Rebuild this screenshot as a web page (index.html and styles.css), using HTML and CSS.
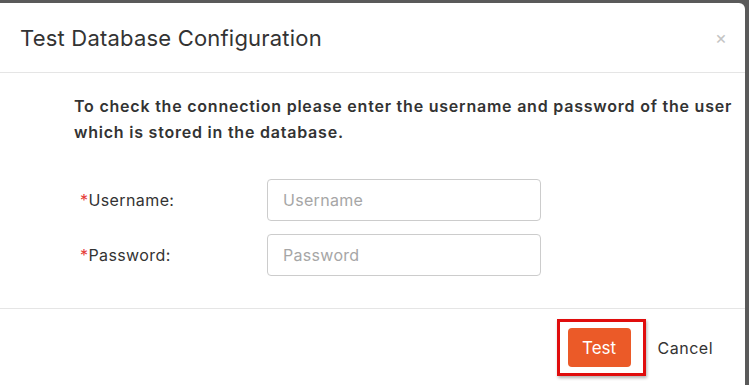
FILE: index.html
```html
<!DOCTYPE html>
<html lang="en">
<head>
    <meta charset="UTF-8">
    <meta name="viewport" content="width=device-width, initial-scale=1.0">
    <title>Test Database Configuration</title>
    <link rel="stylesheet" href="styles.css">
</head>
<body>
    <div class="modal">
        <div class="modal-header">
            <h4 class="modal-title">Test Database Configuration</h4>
            <span class="close">&times;</span>
        </div>
        <div class="modal-body">
            <p class="intro">To check the connection please enter the username and password of the user which is stored in the database.</p>
            <div class="form-row">
                <label class="label"><span class="req">*</span>Username:</label>
                <input class="input" type="text" placeholder="Username">
            </div>
            <div class="form-row">
                <label class="label"><span class="req">*</span>Password:</label>
                <input class="input" type="password" placeholder="Password">
            </div>
        </div>
        <div class="modal-footer">
            <div class="highlight">
                <button class="btn-test">Test</button>
            </div>
            <button class="btn-cancel">Cancel</button>
        </div>
    </div>
</body>
</html>
```

FILE: styles.css
```css
body {
    margin: 0;
    font-family: 'Inter', 'Open Sans', sans-serif;
    background-color: #5a5a5a;
    color: #333;
}
.modal {
    margin: 3px 4px 0 0;
    height: 382px;
    background-color: #fff;
    border-top-right-radius: 6px;
    display: flex;
    flex-direction: column;
}
.modal-header {
    height: 69px;
    display: flex;
    align-items: center;
    justify-content: space-between;
    padding: 0 20px;
    border-bottom: 1px solid #e5e5e5;
}
.modal-title {
    margin: 0;
    font-size: 22px;
    font-weight: 400;
    color: #333;
    letter-spacing: 0.2px;
}
.close {
    font-size: 18px;
    color: #c4c4c4;
    margin-right: -2px;
}
.modal-body {
    padding: 20px 0 0 74px;
    height: 215px;
    border-bottom: 1px solid #e5e5e5;
}
.intro {
    max-width: 668px;
    margin: 0 0 34px;
    font-size: 16px;
    font-weight: 600;
    line-height: 26px;
    letter-spacing: 0.78px;
    color: #333;
}
.form-row {
    display: flex;
    align-items: center;
    margin-bottom: 13px;
}
.label {
    width: 187px;
    padding-left: 6px;
    font-size: 16px;
    letter-spacing: 0.4px;
    color: #333;
}
.req {
    color: #e53935;
}
.input {
    width: 274px;
    height: 42px;
    box-sizing: border-box;
    border: 1px solid #ccc;
    border-radius: 4px;
    padding: 0 15px;
    font-family: inherit;
    font-size: 16px;
    letter-spacing: 0.3px;
    color: #333;
}
.input::placeholder {
    color: #a6a6a6;
}
.modal-footer {
    display: flex;
    align-items: center;
    justify-content: flex-end;
    padding: 10px 32px 0 0;
}
.highlight {
    border: 3px solid #e00d0d;
    padding: 6px 12px 6px 8px;
    box-shadow: 1px 2px 3px rgba(0, 0, 0, 0.3);
}
.btn-test {
    display: block;
    width: 63px;
    height: 39px;
    border: none;
    border-radius: 4px;
    background-color: #eb5a28;
    color: #fff;
    font-family: inherit;
    font-size: 17px;
}
.btn-cancel {
    margin-left: 12px;
    border: none;
    background: none;
    font-family: inherit;
    font-size: 16px;
    letter-spacing: 0.5px;
    color: #333;
    padding: 0;
}
```
